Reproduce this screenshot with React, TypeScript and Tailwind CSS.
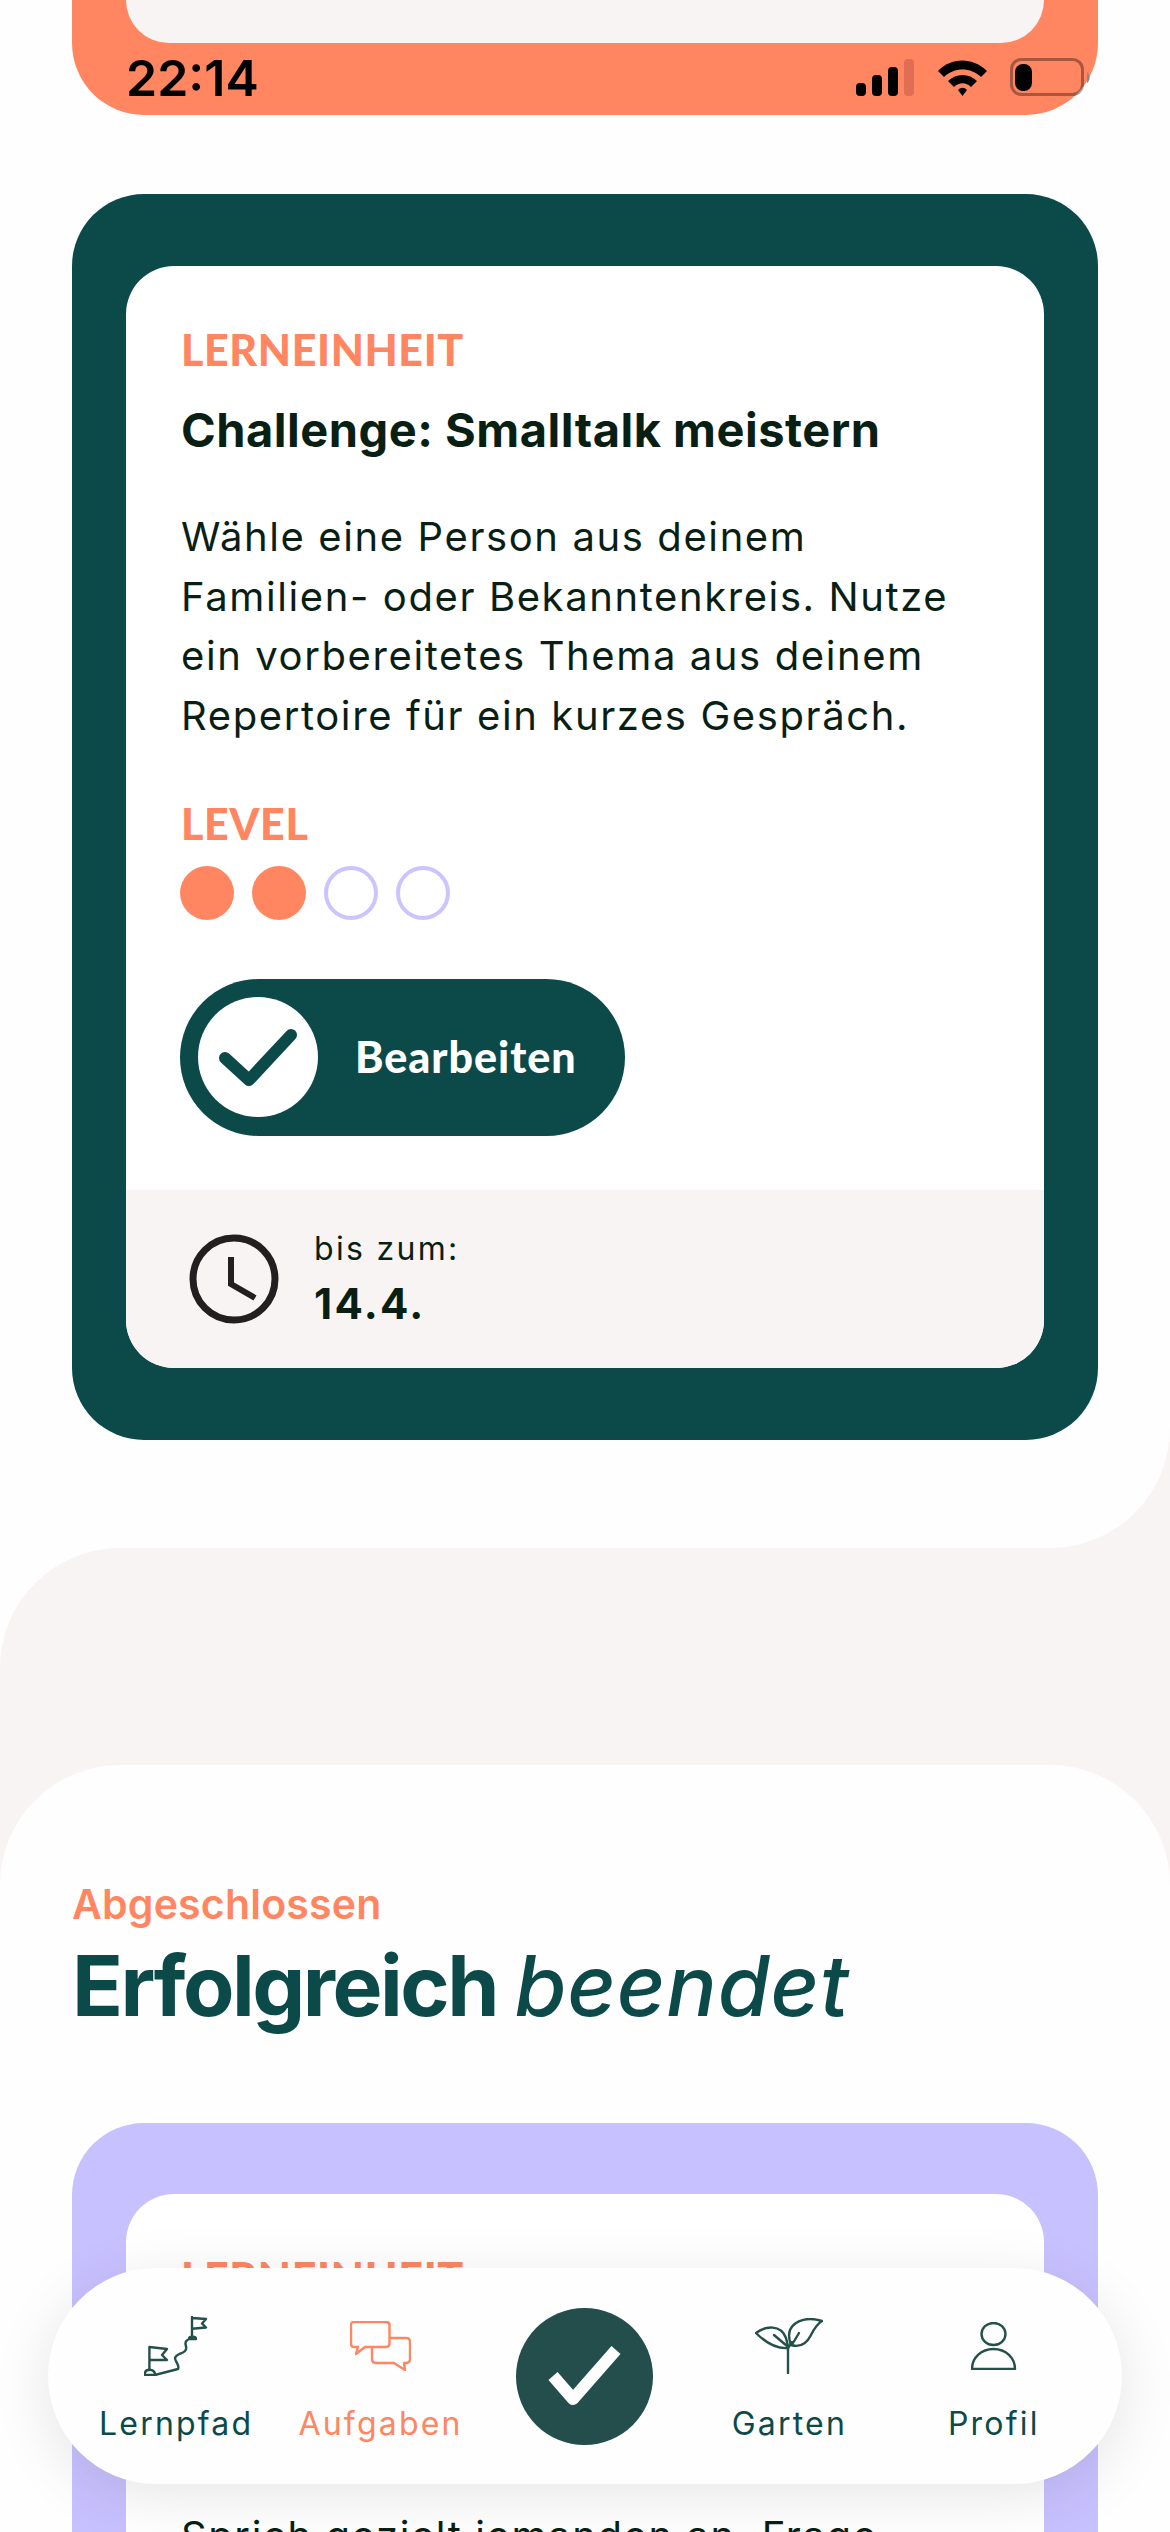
const tabClass = "flex flex-col items-center"

function Label({ children }: { children: string }) {
  return <p className="h-[48px] font-['Lato',sans-serif] text-[43px] leading-[48px] font-black tracking-[0.6px] text-[#ff8661] uppercase">{children}</p>
}

function StatusIcons() {
  return (
    <svg width="240" height="42" viewBox="0 0 240 42" fill="none" className="shrink-0">
      <rect x="0" y="27" width="10" height="13" rx="4" fill="#000" />
      <rect x="16" y="19" width="10" height="21" rx="4" fill="#000" />
      <rect x="32" y="11" width="10" height="29" rx="4" fill="#000" />
      <rect x="48" y="3" width="10" height="37" rx="4" fill="#e06e54" />
      <path d="M82 15 C95 1 117 1 131 15 L125 21 C115 11 98 11 88 21 Z" fill="#000" />
      <path d="M92 25 C100 17 113 17 121 25 L115 31 C110 26 103 26 98 31 Z" fill="#000" />
      <path d="M102 34 C105 31 108 31 111 34 L106.500 40 Z" fill="#000" />
      <rect x="155.500" y="3.500" width="71" height="35" rx="10" stroke="#000" strokeOpacity="0.35" strokeWidth="3" />
      <rect x="159" y="8" width="17" height="27" rx="8" fill="#000" />
      <path d="M231 16 C234 18 235 24 231 27 Z" fill="#8a8a8a" />
    </svg>
  )
}

function PathIcon() {
  return (
    <svg width="64" height="60" viewBox="0 0 64 60" fill="none" stroke="#235049" strokeWidth="2.400" strokeLinejoin="round" strokeLinecap="round">
      <path d="M48 1 V21 M48 2 L62 3 L58 7.500 L62 11.500 L48 12.700" />
      <path d="M45 23 C45 20 52 20 52 23 Z" />
      <path d="M43.500 24 C38 27 45 31 41 35 C38 38 32 38 31 42 C31 46 36 49 34 53 L11 59" />
      <path d="M5.400 54 V31 L23 33 L18 39 L23 44 L5.400 44" />
      <path d="M0.500 59 C1 52 10 52 11.500 59 Z" />
    </svg>
  )
}

function ChatIcon() {
  return (
    <svg width="61" height="50" viewBox="0 0 61 50" fill="none" stroke="#ff8661" strokeWidth="2.400" strokeLinejoin="round">
      <path d="M4 1 H36 Q39.500 1 39.500 4 V22 Q39.500 26 36 26 H15 L6 33 L8 26 H4 Q1 26 1 22 V4 Q1 1 4 1 Z" />
      <path d="M39.500 17 H56 Q60 17 60 21 V38 Q60 42 56 42 H54 L55 49 L44 42 H26 Q22 42 22 38 V26" />
    </svg>
  )
}

function PlantIcon() {
  return (
    <svg width="68" height="56" viewBox="0 0 68 56" fill="none" stroke="#235049" strokeWidth="2.400" strokeLinejoin="round" strokeLinecap="round">
      <path d="M33 55 V30" />
      <path d="M1 15 C10 8 26 6 31 20 C32 24 33 27 33 30 C22 31 12 26 1 15 Z" />
      <path d="M67 3 C55 -1 40 1 35 12 C33 18 34 22 36 27 C46 30 52 25 56 17 C59 11 62 6 67 3 Z" />
      <path d="M19 17 L32 28 M38 25 L44 15 M33 30 L37 24" />
    </svg>
  )
}

function PersonIcon() {
  return (
    <svg width="46" height="48" viewBox="0 0 46 48" fill="none" stroke="#235049" strokeWidth="2.400">
      <ellipse cx="22.500" cy="12" rx="12" ry="11" />
      <path d="M1 47 C1 36 10 27 22.500 27 C35 27 44 36 44 47 Z" strokeLinejoin="round" />
    </svg>
  )
}

function ClockIcon() {
  return (
    <svg width="90" height="90" viewBox="0 0 90 90" fill="none" stroke="#231f20" strokeWidth="7">
      <circle cx="45" cy="45" r="41" />
      <path d="M42 23 V50 L66 64" strokeWidth="6" />
    </svg>
  )
}

export default function App() {
  return (
    <div className="relative h-[2532px] overflow-hidden bg-[#fefefe] font-['Inter',sans-serif] text-[#0a1f14]">
      <div className="bg-[#f7f4f3]">
        <section className="h-[1548px] rounded-br-[120px] bg-[#fefefe] px-[72px]">
          {/* Previous card, scrolled off the top */}
          <div className="flex h-[115px] flex-col rounded-b-[72px] bg-[#ff8661]">
            <div className="mx-[54px] h-[43px] shrink-0 rounded-b-[50px] bg-[#f7f4f3]" />
            <div className="flex items-start justify-between pt-[11px] pl-[54px]">
              <span className="text-[50px] leading-[48px] font-semibold text-black">22:14</span>
              <div className="mr-[2px] mt-[2px]">
                <StatusIcons />
              </div>
            </div>
          </div>

          {/* Current task */}
          <div className="mt-[79px] rounded-[72px] bg-[#0c4a4a] px-[54px] py-[72px]">
            <div className="overflow-hidden rounded-[48px] bg-white">
              <div className="px-[55px] pt-[60px]">
                <Label>Lerneinheit</Label>
                <h3 className="mt-[26px] text-[47px] leading-[60px] font-bold tracking-[0.5px]">Challenge: Smalltalk meistern</h3>
                <p className="mt-[47px] text-[40px] leading-[59.700px] tracking-[1.6px]">
                  Wähle eine Person aus deinem
                  <br />
                  Familien- oder Bekanntenkreis. Nutze
                  <br />
                  ein vorbereitetes Thema aus deinem
                  <br />
                  Repertoire für ein kurzes Gespräch.
                </p>
                <div className="mt-[54px]">
                  <Label>Level</Label>
                </div>
                <div className="mt-[18px] flex gap-[18px] -ml-[1px]">
                  <span className="size-[54px] rounded-full bg-[#ff8661]" />
                  <span className="size-[54px] rounded-full bg-[#ff8661]" />
                  <span className="size-[54px] rounded-full border-[4px] border-[#cbc4ff]" />
                  <span className="size-[54px] rounded-full border-[4px] border-[#cbc4ff]" />
                </div>
                <button className="mt-[59px] -ml-[1px] flex h-[157px] w-[445px] items-center rounded-full bg-[#0c4a4a] pl-[18px]">
                  <span className="flex size-[120px] items-center justify-center rounded-full bg-white">
                    <svg width="80" height="58" viewBox="0 0 80 58" fill="none" stroke="#0c4a4a" strokeWidth="12" strokeLinecap="round" strokeLinejoin="round">
                      <path d="M7 30 L31 52 L73 7" />
                    </svg>
                  </span>
                  <span className="ml-[37px] font-['Lato',sans-serif] text-[43px] font-black tracking-[1px] text-white">Bearbeiten</span>
                </button>
              </div>
              <div className="mt-[54px] flex h-[178px] items-center bg-[#f7f4f3] pl-[63px]">
                <ClockIcon />
                <div className="ml-[35px]">
                  <p className="text-[32px] leading-[40px] tracking-[2.300px]">bis zum:</p>
                  <p className="mt-[11px] text-[42px] leading-[48px] font-bold tracking-[2.300px]">14.4.</p>
                </div>
              </div>
            </div>
          </div>
        </section>
      </div>

      <div className="bg-[#fefefe]">
        <div className="rounded-tl-[120px] bg-[#f7f4f3] pt-[217px]">
          <section className="rounded-t-[120px] bg-[#fefefe] px-[72px] pt-[115px]">
            <p className="text-[41px] leading-[48px] font-semibold tracking-[0.2px] text-[#ff8661]">Abgeschlossen</p>
            <h2 className="mt-[10px] text-[84px] leading-[96px] font-bold tracking-[-2.500px] text-[#0c4a4a]">
              Erfolgreich <em className="font-medium tracking-[0.8px]">beendet</em>
            </h2>

            <div className="mt-[89px] rounded-t-[72px] bg-[#c8c1ff] px-[54px] pt-[71px]">
              <div className="h-[600px] rounded-t-[48px] bg-white px-[55px] pt-[60px]">
                <Label>Lerneinheit</Label>
                <p className="mt-[204px] text-[40px] leading-[60px] tracking-[1.6px]">Sprich gezielt jemanden an. Frage</p>
              </div>
            </div>
          </section>
        </div>
      </div>

      {/* Tab bar floats over the page */}
      <nav className="absolute bottom-[48px] left-[48px] grid h-[216px] w-[1074px] grid-cols-5 rounded-[108px] bg-[#fefefe] px-[26px] shadow-[0_12px_60px_rgba(0,0,0,0.1)]">
        <div className={tabClass}>
          <div className="flex h-[60px] items-end mt-[48px]"><PathIcon /></div>
          <span className="mt-[28px] text-[32px] leading-[40px] tracking-[2.200px] text-[#0c4a4a]">Lernpfad</span>
        </div>
        <div className={tabClass}>
          <div className="flex h-[60px] items-center mt-[48px]"><ChatIcon /></div>
          <span className="mt-[28px] text-[32px] leading-[40px] tracking-[2.200px] text-[#ff8661]">Aufgaben</span>
        </div>
        <div className="flex items-center justify-center">
          <span className="flex size-[137px] items-center justify-center rounded-full bg-[#244e4b]">
            <svg width="74" height="64" viewBox="0 0 74 64" fill="none" stroke="#fefefe" strokeWidth="12" strokeLinejoin="round" className="-mt-[4px]">
              <path d="M5 34 L25 57 L68 8" />
            </svg>
          </span>
        </div>
        <div className={tabClass}>
          <div className="flex h-[60px] items-center mt-[48px]"><PlantIcon /></div>
          <span className="mt-[28px] text-[32px] leading-[40px] tracking-[2.200px] text-[#0c4a4a]">Garten</span>
        </div>
        <div className={tabClass}>
          <div className="flex h-[60px] items-center mt-[48px]"><PersonIcon /></div>
          <span className="mt-[28px] text-[32px] leading-[40px] tracking-[2.200px] text-[#0c4a4a]">Profil</span>
        </div>
      </nav>
    </div>
  )
}
